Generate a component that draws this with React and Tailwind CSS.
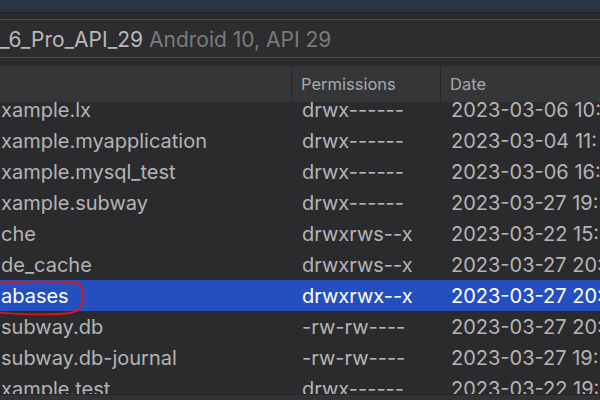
import React from "react";

const rows = [
  { name: "xample.lx", perm: "drwx------", date: "2023-03-06 10:" },
  { name: "xample.myapplication", perm: "drwx------", date: "2023-03-04 11:" },
  { name: "xample.mysql_test", perm: "drwx------", date: "2023-03-06 16:" },
  { name: "xample.subway", perm: "drwx------", date: "2023-03-27 19:" },
  { name: "che", perm: "drwxrws--x", date: "2023-03-22 15:" },
  { name: "de_cache", perm: "drwxrws--x", date: "2023-03-27 20:" },
  { name: "abases", perm: "drwxrwx--x", date: "2023-03-27 20:", selected: true },
  { name: "subway.db", perm: "-rw-rw----", date: "2023-03-27 20:" },
  { name: "subway.db-journal", perm: "-rw-rw----", date: "2023-03-27 19:" },
  { name: "xample.test", perm: "drwx------", date: "2023-03-22 19:" },
];

export default function App() {
  return (
    <div
      className="w-[600px] h-[400px] overflow-hidden bg-[#2b2b2d] flex flex-col leading-none"
      style={{ fontFamily: "Inter, 'Noto Sans', sans-serif" }}
    >
      <div className="h-[13px] shrink-0 bg-[#2b3541] border-b border-[#1f2328]" />
      <div className="h-[6px] shrink-0" />
      <div className="h-[39px] shrink-0 border-y border-[#4e4e50] bg-[#2d2d2f] flex items-center whitespace-nowrap text-[21px] pt-[1px]">
        <span className="text-[#b9b9bb]">_6_Pro_API_29</span>
        <span className="text-[#7b7b7d] ml-[6px]">Android 10, API 29</span>
      </div>
      <div className="h-[8px] shrink-0 border-t border-[#262628]" />
      <div className="h-[36px] shrink-0 bg-[#353638] flex text-[#a9a9ab] text-[16.5px]">
        <div className="w-[291px] shrink-0" />
        <div className="w-[149px] shrink-0 border-l border-[#262628] flex items-center pl-[9px]">Permissions</div>
        <div className="flex-1 border-l border-[#262628] flex items-center pl-[9px]">Date</div>
      </div>
      <div className="flex-1 overflow-hidden relative">
        <div className="-mt-[8px] flex flex-col text-[20px]">
          {rows.map((r, i) => (
            <div
              key={i}
              className={
                "h-[31px] shrink-0 flex items-center whitespace-nowrap relative " +
                (r.selected ? "bg-[#2450bf] text-white" : "text-[#b4b4b6]")
              }
            >
              <div className="w-[292px] shrink-0 pl-[1px]">{r.name}</div>
              <div className="w-[149px] shrink-0 pl-[10px]">{r.perm}</div>
              <div className="flex-1 pl-[10px]">{r.date}</div>
              {r.selected && (
                <svg
                  className="absolute left-0 top-0 overflow-visible"
                  width="90"
                  height="36"
                  viewBox="0 0 90 36"
                >
                  <path
                    d="M-6 4 C 20 1, 60 1, 75 3 C 84 4, 83 12, 82 21 C 81 31, 76 33, 60 34 C 40 35, 10 34, -6 32"
                    fill="none"
                    stroke="#e0141c"
                    strokeWidth="1.8"
                  />
                </svg>
              )}
            </div>
          ))}
        </div>
        <div className="absolute left-0 right-0 bottom-0 h-[6px] bg-[#333335] border-t border-[#262628]" />
      </div>
    </div>
  );
}
